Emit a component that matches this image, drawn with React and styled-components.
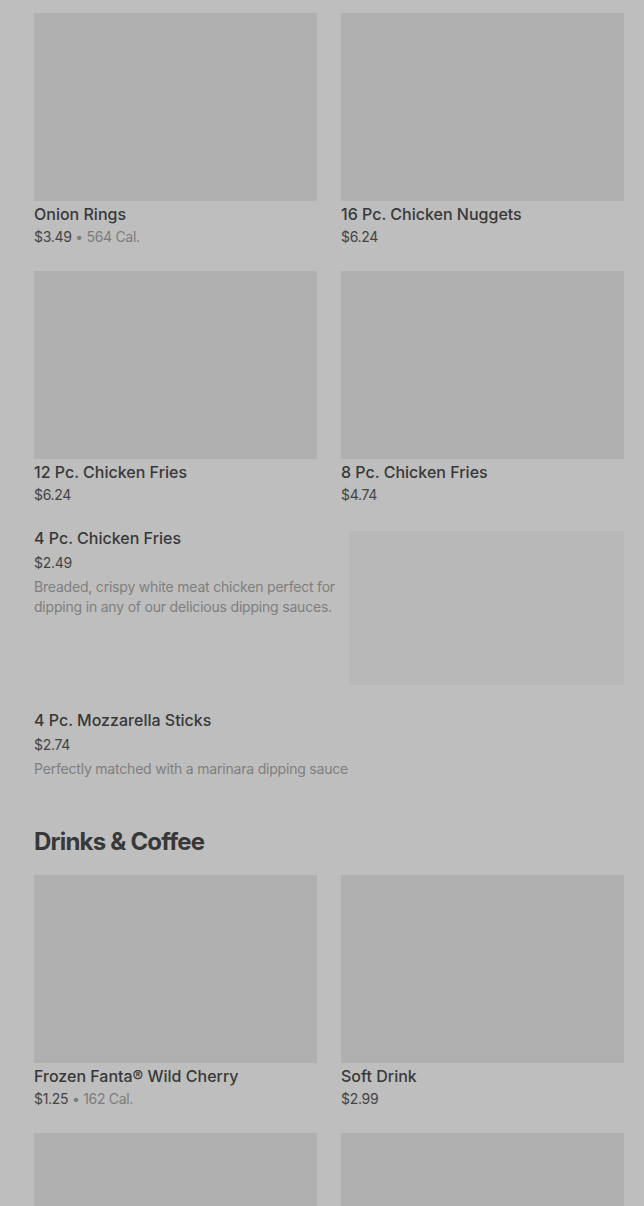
import React from 'react';
import styled, { createGlobalStyle } from 'styled-components';

const GlobalStyle = createGlobalStyle`
  html, body {
    margin: 0;
    padding: 0;
    background-color: #bebebe;
  }
  body {
    font-family: Inter, "Noto Sans", "Liberation Sans", sans-serif;
    color: #333333;
    -webkit-font-smoothing: antialiased;
  }
`;

const StyledPage = styled.main`
  padding: 13px 20px 0 34px;
  height: 1206px;
  overflow: hidden;
  box-sizing: border-box;
`;

const StyledGrid = styled.ul`
  list-style: none;
  margin: 0;
  padding: 0;
  display: grid;
  grid-template-columns: 1fr 1fr;
  column-gap: 24px;
  row-gap: 24px;
`;

const StyledCard = styled.li`
  display: flex;
  flex-direction: column;
`;

const StyledImage = styled.div`
  height: 188px;
  margin-bottom: 1px;
  background-color: #b0b0b0;
`;

const StyledTitle = styled.h3`
  margin: 0;
  font-size: 16px;
  line-height: 24px;
  font-weight: 500;
  letter-spacing: 0;
  color: #383838;
`;

const StyledPrice = styled.p`
  margin: ${({ spaced }) => (spaced ? '3px 0 0' : '1px 0 0')};
  font-size: 14px;
  line-height: 20px;
  letter-spacing: -0.3px;
  color: #444444;
`;

const StyledCal = styled.span`
  color: #7c7c7c;
`;

const StyledList = styled.ul`
  list-style: none;
  margin: 21px 0 0;
  padding: 0;
  display: flex;
  flex-direction: column;
  gap: 23px;
`;

const StyledRow = styled.li`
  display: flex;
  align-items: flex-start;
  gap: 12px;
`;

const StyledRowText = styled.div`
  flex: 1;
  min-width: 0;
`;

const StyledDescription = styled.p`
  margin: 4px 0 0;
  font-size: 14px;
  line-height: 20px;
  letter-spacing: -0.2px;
  color: #7e7e7e;
`;

const StyledThumb = styled.div`
  flex: 0 0 275px;
  height: 154px;
  margin-top: 5px;
  background-color: #b8b8b8;
`;

const StyledHeading = styled.h2`
  margin: 47px 0 17px;
  font-size: 24px;
  line-height: 32px;
  font-weight: 700;
  letter-spacing: -0.8px;
  color: #383838;
`;

const snacks = [
  { id: 'onion', name: 'Onion Rings', price: '$3.49', cal: '564 Cal.' },
  { id: 'nuggets', name: '16 Pc. Chicken Nuggets', price: '$6.24' },
  { id: 'fries12', name: '12 Pc. Chicken Fries', price: '$6.24' },
  { id: 'fries8', name: '8 Pc. Chicken Fries', price: '$4.74' },
];

const listItems = [
  {
    name: '4 Pc. Chicken Fries',
    price: '$2.49',
    description:
      'Breaded, crispy white meat chicken perfect for dipping in any of our delicious dipping sauces.',
    image: true,
  },
  {
    name: '4 Pc. Mozzarella Sticks',
    price: '$2.74',
    description: 'Perfectly matched with a marinara dipping sauce',
  },
];

// the last row only shows its pictures above the fold
const drinks = [
  { id: 'fanta', name: 'Frozen Fanta® Wild Cherry', price: '$1.25', cal: '162 Cal.' },
  { id: 'soft', name: 'Soft Drink', price: '$2.99' },
  { id: 'drink3' },
  { id: 'drink4' },
];

const Card = ({ item }) => (
  <StyledCard>
    <StyledImage />
    {item.name && (
      <>
        <StyledTitle>{item.name}</StyledTitle>
        <StyledPrice>
          {item.price}
          {item.cal && <StyledCal> • {item.cal}</StyledCal>}
        </StyledPrice>
      </>
    )}
  </StyledCard>
);

const App = () => (
  <>
    <GlobalStyle />
    <StyledPage>
      <StyledGrid>
        {snacks.map((item) => (
          <Card key={item.id} item={item} />
        ))}
      </StyledGrid>
      <StyledList>
        {listItems.map((item) => (
          <StyledRow key={item.name}>
            <StyledRowText>
              <StyledTitle>{item.name}</StyledTitle>
              <StyledPrice spaced>{item.price}</StyledPrice>
              <StyledDescription>{item.description}</StyledDescription>
            </StyledRowText>
            {item.image && <StyledThumb />}
          </StyledRow>
        ))}
      </StyledList>
      <StyledHeading>Drinks &amp; Coffee</StyledHeading>
      <StyledGrid>
        {drinks.map((item) => (
          <Card key={item.id} item={item} />
        ))}
      </StyledGrid>
    </StyledPage>
  </>
);

export default App;
